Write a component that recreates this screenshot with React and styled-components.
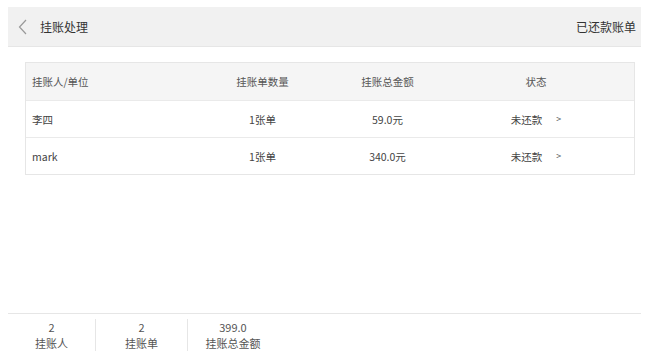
import React from 'react'
import styled, { createGlobalStyle } from 'styled-components'

const GlobalStyle = createGlobalStyle`
  html, body {
    margin: 0;
    padding: 0;
    background: #fff;
  }
  body {
    font-family: "Noto Sans CJK SC", "Noto Sans", sans-serif;
    color: #333;
  }
`

const Page = styled.div`
  box-sizing: border-box;
  height: 362px;
  padding: 7px 9px 7px 8px;
  display: flex;
  flex-direction: column;
`

const Header = styled.div`
  height: 40px;
  background: #f1f1f1;
  border-bottom: 1px solid #e6e6e6;
  box-sizing: border-box;
  display: flex;
  align-items: center;
  padding: 0 5px 0 10px;
`

const Back = styled.button`
  border: none;
  background: none;
  padding: 0;
  width: 10px;
  height: 16px;
  display: flex;
  align-items: center;
  cursor: pointer;
`

const Title = styled.div`
  margin-left: 12px;
  font-size: 12px;
  color: #333;
  flex: 1;
`

const HeaderLink = styled.div`
  font-size: 12px;
  color: #333;
`

const Table = styled.div`
  margin: 15px 6px 0 17px;
  border: 1px solid #e6e6e6;
`

const Row = styled.div`
  display: grid;
  grid-template-columns: 174px 125px 125px 1fr;
  height: ${p => (p.$head ? '37px' : '36px')};
  align-items: center;
  font-size: 10.5px;
  color: ${p => (p.$head ? '#555' : '#444')};
  background: ${p => (p.$head ? '#f5f5f5' : '#fff')};
  border-top: ${p => (p.$head ? 'none' : '1px solid #eaeaea')};
`

const Cell = styled.div`
  text-align: ${p => (p.$left ? 'left' : 'center')};
  padding-left: ${p => (p.$left ? '6px' : '0')};
`

const Status = styled.div`
  display: flex;
  justify-content: center;
  gap: 14px;
  padding-right: 12px;
`

const Arrow = styled.span`
  font-size: 9px;
  color: #555;
`

const Footer = styled.div`
  margin-top: auto;
  box-sizing: border-box;
  height: 42px;
  border-top: 1px solid #e6e6e6;
  display: flex;
  padding: 5px 0 4px;
`

const Stat = styled.div`
  width: ${p => p.$w}px;
  display: flex;
  flex-direction: column;
  align-items: center;
  justify-content: center;
  font-size: 11px;
  line-height: 16px;
  color: #555;
  border-right: ${p => (p.$last ? 'none' : '1px solid #e6e6e6')};
`

const rows = [
  { name: '李四', count: '1张单', amount: '59.0元', status: '未还款' },
  { name: 'mark', count: '1张单', amount: '340.0元', status: '未还款' },
]

const stats = [
  { value: '2', label: '挂账人', w: 87 },
  { value: '2', label: '挂账单', w: 91 },
  { value: '399.0', label: '挂账总金额', w: 90, last: true },
]

export default function App() {
  return (
    <Page>
      <GlobalStyle />
      <Header>
        <Back>
          <svg width="9" height="16" viewBox="0 0 9 16">
            <path d="M8 1 L1.5 8 L8 15" fill="none" stroke="#999" strokeWidth="1.2" />
          </svg>
        </Back>
        <Title>挂账处理</Title>
        <HeaderLink>已还款账单</HeaderLink>
      </Header>
      <Table>
        <Row $head>
          <Cell $left>挂账人/单位</Cell>
          <Cell>挂账单数量</Cell>
          <Cell>挂账总金额</Cell>
          <Status>状态</Status>
        </Row>
        {rows.map(r => (
          <Row key={r.name}>
            <Cell $left>{r.name}</Cell>
            <Cell>{r.count}</Cell>
            <Cell>{r.amount}</Cell>
            <Status>
              <span>{r.status}</span>
              <Arrow>&gt;</Arrow>
            </Status>
          </Row>
        ))}
      </Table>
      <Footer>
        {stats.map(s => (
          <Stat key={s.label} $w={s.w} $last={s.last}>
            <span>{s.value}</span>
            <span>{s.label}</span>
          </Stat>
        ))}
      </Footer>
    </Page>
  )
}
